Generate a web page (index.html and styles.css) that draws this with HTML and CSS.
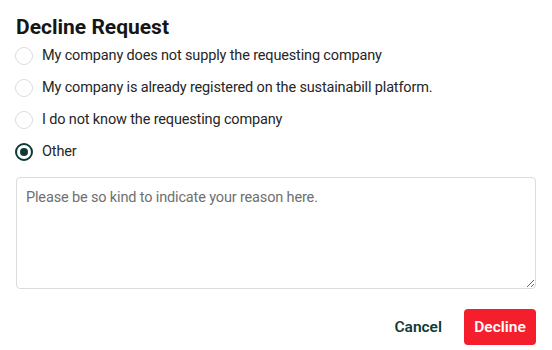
FILE: index.html
```html
<!DOCTYPE html>
<html lang="en">
<head>
    <meta charset="UTF-8">
    <meta name="viewport" content="width=device-width, initial-scale=1.0">
    <title>Decline Request</title>
    <link rel="stylesheet" href="styles.css">
</head>
<body>
    <div class="decline-dialog">
        <h1 class="dialog-title">Decline Request</h1>

        <form class="decline-form">
            <div class="reason-list" role="radiogroup">
                <label class="reason-option">
                    <input type="radio" name="reason" class="reason-radio">
                    <span class="reason-text">My company does not supply the requesting company</span>
                </label>
                <label class="reason-option">
                    <input type="radio" name="reason" class="reason-radio">
                    <span class="reason-text">My company is already registered on the sustainabill platform.</span>
                </label>
                <label class="reason-option">
                    <input type="radio" name="reason" class="reason-radio">
                    <span class="reason-text">I do not know the requesting company</span>
                </label>
                <label class="reason-option">
                    <input type="radio" name="reason" class="reason-radio" checked>
                    <span class="reason-text">Other</span>
                </label>
            </div>

            <textarea class="reason-input" placeholder="Please be so kind to indicate your reason here."></textarea>

            <div class="dialog-actions">
                <button type="button" class="btn-cancel">Cancel</button>
                <button type="submit" class="btn-decline">Decline</button>
            </div>
        </form>
    </div>
</body>
</html>
```

FILE: styles.css
```css
:root {
    --text-dark: #161616;
    --text-body: #262626;
    --text-muted: #6f6f6f;
    --border-color: #dcdcdc;
    --brand-dark: #0e3b37;
    --danger: #f41e2d;
    --white: #fff;
}

* {
    margin: 0;
    padding: 0;
    box-sizing: border-box;
}

body {
    font-family: "Roboto", "Liberation Sans", sans-serif;
    background-color: var(--white);
    color: var(--text-body);
}

.decline-dialog {
    padding: 14px 16px 0;
}

.dialog-title {
    color: var(--text-dark);
    font-size: 21px;
    font-weight: 700;
    line-height: 26px;
}

.decline-form {
    display: flex;
    flex-direction: column;
}

.reason-list {
    display: flex;
    flex-direction: column;
}

.reason-option {
    display: flex;
    align-items: center;
    gap: 9px;
    height: 32px;
    cursor: pointer;
}

/* custom radio circle */
.reason-radio {
    appearance: none;
    -webkit-appearance: none;
    width: 18px;
    height: 18px;
    margin-left: -1px;
    border: 1px solid var(--border-color);
    border-radius: 50%;
    display: grid;
    place-items: center;
    flex-shrink: 0;
    cursor: pointer;
}

.reason-radio:checked {
    border: 2px solid var(--brand-dark);
}

.reason-radio:checked::after {
    content: "";
    width: 8px;
    height: 8px;
    border-radius: 50%;
    background-color: var(--brand-dark);
}

.reason-text {
    font-size: 14.5px;
    letter-spacing: -0.15px;
    line-height: 20px;
}

.reason-input {
    margin-top: 9px;
    width: 100%;
    height: 112px;
    padding: 9px 9px;
    border: 1px solid var(--border-color);
    border-radius: 4px;
    font-family: inherit;
    font-size: 14.5px;
    letter-spacing: -0.15px;
    line-height: 22px;
    color: var(--text-body);
    outline: none;
}

.reason-input::placeholder {
    color: var(--text-muted);
}

.dialog-actions {
    display: flex;
    justify-content: flex-end;
    align-items: center;
    gap: 22px;
    margin-top: 20px;
}

.btn-cancel {
    background: none;
    border: none;
    color: var(--brand-dark);
    font-family: inherit;
    font-size: 15.5px;
    font-weight: 600;
    cursor: pointer;
}

.btn-decline {
    background-color: var(--danger);
    color: var(--white);
    border: none;
    border-radius: 4px;
    width: 72px;
    height: 36px;
    font-family: inherit;
    font-size: 15.5px;
    font-weight: 600;
    cursor: pointer;
}
```
